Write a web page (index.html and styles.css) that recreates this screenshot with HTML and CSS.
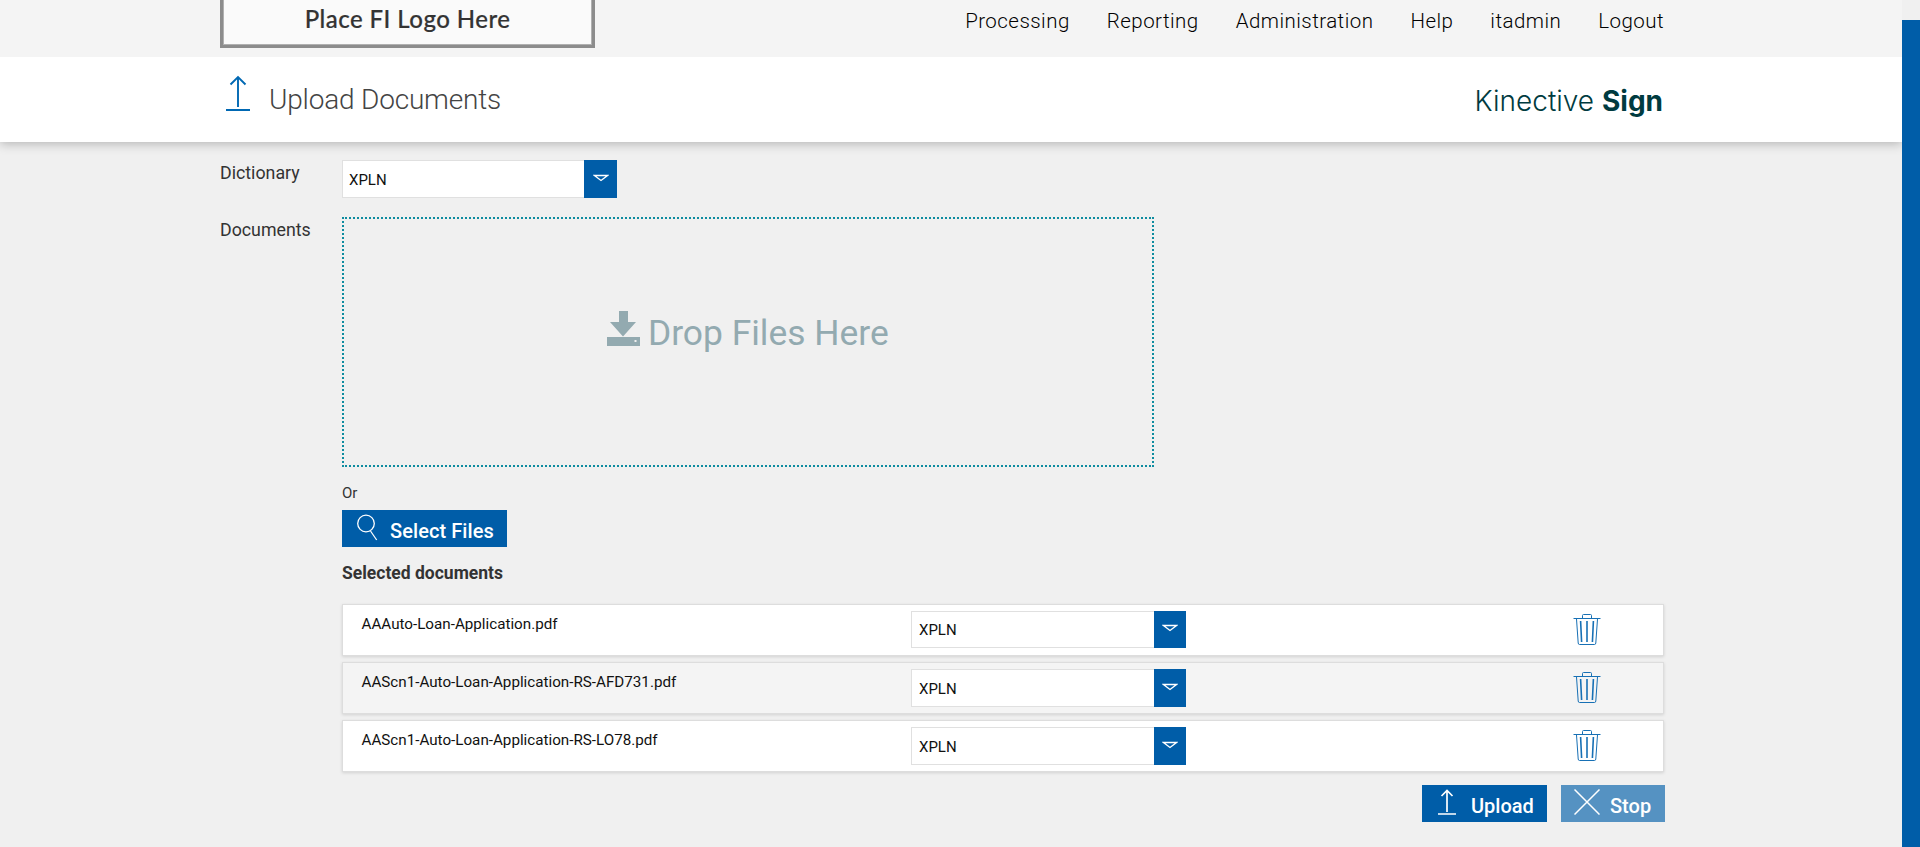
FILE: index.html
```
<!DOCTYPE html>
<html lang="en">
<head>
<meta charset="utf-8">
<title>Upload Documents</title>
<link rel="stylesheet" href="styles.css">
</head>
<body>
<svg class="defs" width="0" height="0">
  <symbol id="caret" viewBox="0 0 16 8"><path d="M1.500 1.500h13L8 6.500z" fill="none" stroke="currentColor" stroke-width="1.300"/></symbol>
  <symbol id="trash" viewBox="0 0 28 32"><g fill="none" stroke="currentColor"><path d="M.5 5.500h27M9.500 5V2.500q0-1 1-1h7q1 0 1 1V5M3.500 6l1.700 24q.1 1.500 1.300 1.500h15q1.200 0 1.300-1.500l1.700-24"/><path d="M7.600 8l1 21M14 8v21M20.400 8l-1 21" stroke-width="1.600"/></g></symbol>
</svg>
<div class="page">
  <div class="main">
    <header class="header">
      <div class="container header-row">
        <div class="logo">Place FI Logo Here</div>
        <nav class="nav"><a>Processing</a><a>Reporting</a><a>Administration</a><a>Help</a><a>itadmin</a><a>Logout</a></nav>
      </div>
    </header>
    <div class="titlebar">
      <div class="container title-row">
        <svg class="title-icon" viewBox="0 0 26 36"><path d="M1 35h24M13 32V2M5.500 9.500l7.500-7.500 7.500 7.500" fill="none" stroke="currentColor" stroke-width="1.900"/></svg>
        <h1 class="title">Upload Documents</h1>
        <div class="brand"><span>Kinective</span> <b>Sign</b></div>
      </div>
    </div>
    <main class="container form">
      <div class="field">
        <label class="label">Dictionary</label>
        <div class="select"><span class="value">XPLN</span><span class="arrow"><svg><use href="#caret"/></svg></span></div>
      </div>
      <div class="field documents">
        <label class="label">Documents</label>
        <div class="content">
          <div class="drop">
            <svg class="drop-icon" viewBox="0 0 33 35"><path fill="currentColor" fill-rule="evenodd" d="M12 0h9v11h8L16 25.500 3 11h9zM0 26h33v9H0zM27.500 29v2h2v-2z"/></svg>
            <span class="drop-text">Drop Files Here</span>
          </div>
          <div class="or">Or</div>
          <button class="btn btn-select"><svg class="ico-search" viewBox="0 0 21 27"><g fill="none" stroke="currentColor" stroke-width="1.300"><circle cx="9" cy="9.500" r="8.300"/><path d="M13.500 17l6.200 9"/></g></svg><span>Select Files</span></button>
          <h2 class="subtitle">Selected documents</h2>
          <div class="rows">
            <div class="row">
              <span class="name">AAAuto-Loan-Application.pdf</span>
              <div class="select short"><span class="value">XPLN</span><span class="arrow"><svg><use href="#caret"/></svg></span></div>
              <svg class="trash"><use href="#trash"/></svg>
            </div>
            <div class="row alt">
              <span class="name">AAScn1-Auto-Loan-Application-RS-AFD731.pdf</span>
              <div class="select"><span class="value">XPLN</span><span class="arrow"><svg><use href="#caret"/></svg></span></div>
              <svg class="trash"><use href="#trash"/></svg>
            </div>
            <div class="row">
              <span class="name">AAScn1-Auto-Loan-Application-RS-LO78.pdf</span>
              <div class="select"><span class="value">XPLN</span><span class="arrow"><svg><use href="#caret"/></svg></span></div>
              <svg class="trash"><use href="#trash"/></svg>
            </div>
          </div>
          <div class="actions">
            <button class="btn btn-upload"><svg class="ico-up" viewBox="0 0 19 26"><path d="M0 25h18M9 23V1.500M3.500 7L9 1.500 14.500 7" fill="none" stroke="currentColor" stroke-width="1.700"/></svg><span>Upload</span></button>
            <button class="btn btn-stop"><svg class="ico-x" viewBox="0 0 26 26"><path d="M.5.500l25 25M25.500.500l-25 25" fill="none" stroke="currentColor" stroke-width="1.500"/></svg><span>Stop</span></button>
          </div>
        </div>
      </div>
    </main>
  </div>
  <div class="scrollbar"><div class="thumb"></div></div>
</div>
</body>
</html>
```
FILE: styles.css
```
* { box-sizing: border-box; }
body { margin: 0; background: #f0f0f0; color: #333; font-family: Roboto, "Liberation Sans", sans-serif; }
.defs { display: block; }
.page { display: flex; height: 847px; overflow: hidden; }
.main { width: 1902px; height: 847px; }
.scrollbar { width: 18px; padding-top: 20px; background: #f0f0f0; }
.thumb { height: 827px; background: #005da8; }
.container { width: 1445px; margin-left: 220px; }

.header { height: 57px; background: #f4f4f4; }
.header-row { display: flex; justify-content: space-between; align-items: flex-start; }
.logo { width: 375px; height: 48px; border: 3px solid #8c8c8c; border-top: 0; background: #fafafa; box-shadow: inset 1px 0 #b0b0b0, inset -1px -1px #b0b0b0; color: #333; text-align: center; font: 500 24px/38px Lato, sans-serif; letter-spacing: .45px; -webkit-text-stroke: .2px #333; }
.nav { display: flex; gap: 37px; padding: 9px 1px 0 0; font-size: 20.500px; font-weight: 300; line-height: 24px; letter-spacing: .46px; color: #000; }

.titlebar { position: relative; height: 85px; background: #fff; box-shadow: 0 2px 10px rgba(0, 0, 0, .25); clip-path: inset(0 0 -20px 0); }
.title-row { display: flex; align-items: flex-start; }
.title-icon { width: 26px; height: 36px; margin: 18px 0 0 5px; color: #0068b3; }
.title { margin: 26px 0 0 18px; font-size: 28px; font-weight: 300; line-height: 34px; letter-spacing: -.19px; color: #444; }
.brand { margin: 27px 2px 0 auto; font: 300 28px/34px Inter, sans-serif; color: #003b40; }
.brand b { font-weight: 700; }

.form { padding-top: 18px; }
.field { display: flex; align-items: flex-start; }
.documents { margin-top: 19px; }
.label { width: 122px; padding-top: 1px; font-size: 17.800px; line-height: 24px; color: #333; }
.content { width: 1323px; }
.select { display: flex; width: 275px; height: 38px; background: #fff; border: 1px solid #e0e0e0; border-right: 0; }
.value { flex: 1; padding-left: 6px; font-size: 15px; line-height: 38px; color: #111; }
.arrow { width: 33px; margin: -1px 0; padding: 14px 0 0 9px; background: #005da8; color: #fff; }
.arrow svg { display: block; width: 16px; height: 8px; }
.drop { display: flex; width: 812px; height: 250px; border: 2px dotted #0e8ca0; color: #93aab0; padding: 92px 0 0 263px; }
.drop-icon { width: 33px; height: 35px; }
.drop-text { margin: 1px 0 0 8px; font-size: 35.400px; line-height: 42px; }
.or { margin-top: 16px; font-size: 15px; line-height: 20px; color: #333; }
.btn { display: flex; align-items: flex-start; height: 37px; margin: 0; padding: 0; border: 0; background: #005da8; color: #fff; font: 500 20px/24px Roboto, sans-serif; }
.btn span { margin-top: 9px; }
.btn-select { width: 165px; margin-top: 7px; }
.ico-search { width: 21px; height: 27px; margin: 4px 12px 0 15px; }
.btn-select span { letter-spacing: .08px; }
.subtitle { margin: 14px 0 0; font-size: 17.500px; font-weight: 700; line-height: 24px; color: #333; }
.rows { display: flex; flex-direction: column; gap: 6px; margin-top: 19px; }
.row { display: flex; align-items: flex-start; width: 1322px; height: 52px; border: 1px solid #ddd; background: #fff; box-shadow: 0 1px 3px rgba(0, 0, 0, .13); }
.row.alt { background: #f4f4f4; }
.name { width: 568px; padding: 9px 0 0 18.500px; font-size: 15.200px; line-height: 20px; color: #111; }
.row .select { margin-top: 6px; }
.select.short { height: 37px; }
.short .value { line-height: 36px; }
.row .value { padding-left: 7px; }
.row .arrow { width: 32px; padding-left: 8px; }
.short .arrow { padding-top: 13px; }
.trash { width: 28px; height: 32px; margin: 8px 0 0 387px; color: #1770b5; }
.actions { display: flex; justify-content: flex-end; gap: 14px; margin-top: 13px; }
.btn-upload { width: 125px; }
.ico-up { width: 19px; height: 26px; margin: 4px 14px 0 16px; }
.btn-stop { width: 104px; background: #5592c2; }
.ico-x { width: 26px; height: 26px; margin: 4px 10px 0 13px; }
```
